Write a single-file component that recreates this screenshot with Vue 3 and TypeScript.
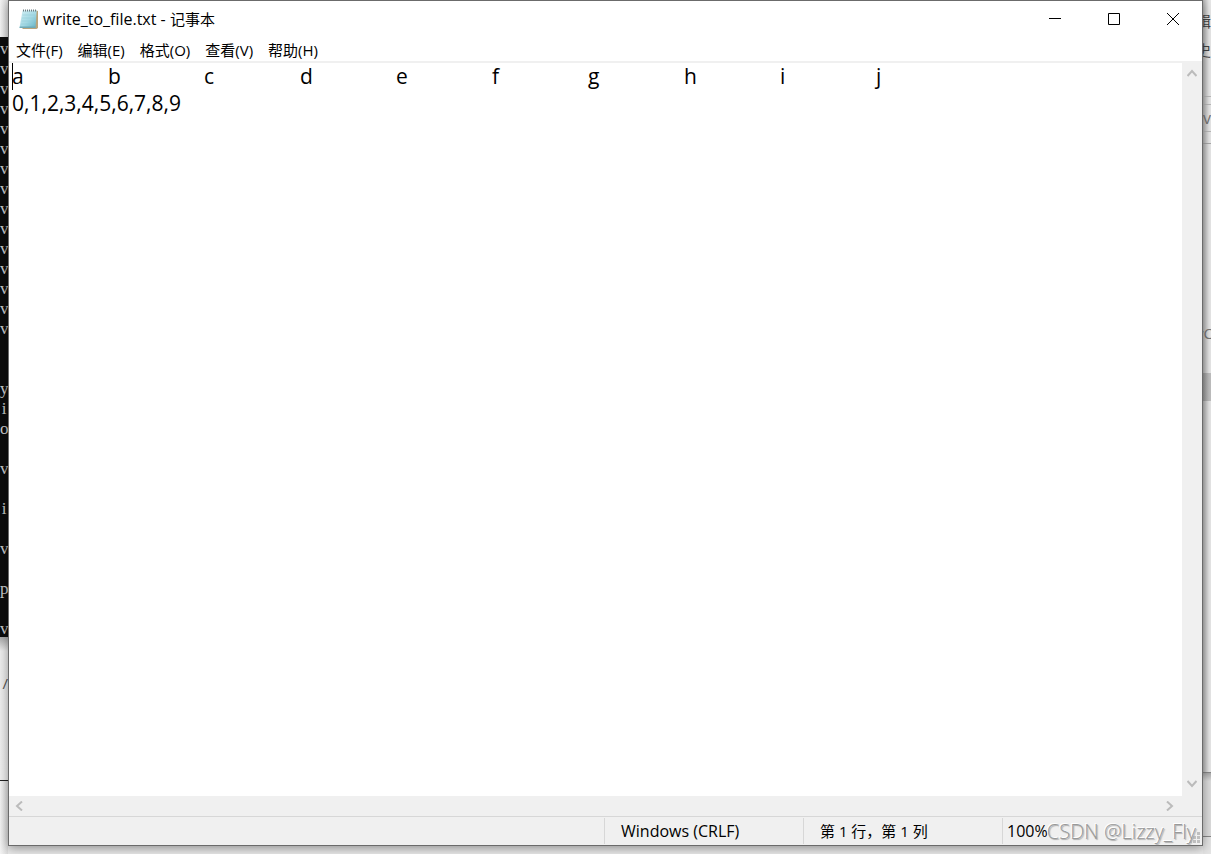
<script setup lang="ts">
import { ref } from 'vue'

const menus = ['文件(F)', '编辑(E)', '格式(O)', '查看(V)', '帮助(H)']
const content = ref('a\tb\tc\td\te\tf\tg\th\ti\tj\n0,1,2,3,4,5,6,7,8,9')
const consoleRows: string[] = [...'vvvvvvvvvvvvvvv  yio v i v p v']
</script>

<template>
  <main class="desktop">
    <aside class="behind left">
      <div class="left-top"></div>
      <div class="console">
        <div v-for="(c, i) in consoleRows" :key="i" class="console-row">{{ c }}</div>
      </div>
      <div class="left-page"><span>/</span></div>
      <div class="left-end"></div>
    </aside>

    <section class="window">
      <header class="titlebar">
        <svg class="app-icon" width="20" height="22" viewBox="0 0 20 22" aria-hidden="true">
          <defs>
            <linearGradient id="sheet" x1="0" y1="0" x2="1" y2="1">
              <stop offset="0" stop-color="#d3eff4" />
              <stop offset=".55" stop-color="#a3d8e3" />
              <stop offset="1" stop-color="#5fb0c2" />
            </linearGradient>
          </defs>
          <path d="M17.500 2.500l1.500.5v17l-1.500 1H3.500v-1z" fill="#b9a47c" />
          <path d="M3.500 2.500h14.200l-1.200 17.500H.5z" fill="url(#sheet)" />
          <path d="M.5 20l.3-1.500h15.800l-.1 1.500z" fill="#6fa9b6" />
          <path d="M3.500 7h12.500M3.100 10h12.500M2.700 13h12.500M2.300 16h12.500" stroke="#8ccad7" stroke-width=".5" />
          <path d="M4.500 1.500v2M6.500 1.500v2M8.500 1.500v2M10.500 1.500v2M12.500 1.500v2M14.500 1.500v2M16.500 1.500v2" stroke="#6d7d82" />
        </svg>
        <h1>write_to_file.txt - <span>记事本</span></h1>
        <div class="controls">
          <button type="button" aria-label="最小化">
            <svg width="12" height="12" viewBox="0 0 12 12"><path d="M0 5.500h12" /></svg>
          </button>
          <button type="button" aria-label="最大化">
            <svg width="12" height="12" viewBox="0 0 12 12"><path d="M.5.5h11v11H.5z" /></svg>
          </button>
          <button type="button" aria-label="关闭">
            <svg width="12" height="12" viewBox="0 0 12 12"><path d="M0 0l12 12M12 0L0 12" /></svg>
          </button>
        </div>
      </header>

      <nav class="menubar">
        <button v-for="m in menus" :key="m" type="button">{{ m }}</button>
      </nav>

      <div class="editor">
        <div class="page">
          <textarea v-model="content" aria-label="文本编辑器" wrap="off" spellcheck="false"></textarea>
          <i class="caret"></i>
        </div>
        <div class="vbar">
          <button type="button" aria-label="向上滚动">
            <svg width="10" height="8" viewBox="0 0 10 8"><path d="M.5 7L5 2l4.500 5" /></svg>
          </button>
          <button type="button" aria-label="向下滚动">
            <svg width="10" height="8" viewBox="0 0 10 8"><path d="M.5 1L5 6l4.500-5" /></svg>
          </button>
        </div>
        <div class="hbar">
          <button type="button" aria-label="向左滚动">
            <svg width="8" height="10" viewBox="0 0 8 10"><path d="M7 .5L2 5l5 4.500" /></svg>
          </button>
          <button type="button" aria-label="向右滚动">
            <svg width="8" height="10" viewBox="0 0 8 10"><path d="M1 .5L6 5 1 9.500" /></svg>
          </button>
        </div>
      </div>

      <footer class="status">
        <span></span>
        <span class="wide latin">Windows (CRLF)</span>
        <span class="wide">第 1 行，第 1 列</span>
        <span class="latin">100%</span>
        <svg class="grip" width="11" height="11" viewBox="0 0 11 11" aria-hidden="true">
          <path d="M8 0h3v3H8zM4 4h3v3H4zM8 4h3v3H8zM0 8h3v3H0zM4 8h3v3H4zM8 8h3v3H8z" fill="#bfbfbf" />
        </svg>
      </footer>
    </section>

    <aside class="behind right">
      <div class="r-head"><span>辑</span><span>史</span></div>
      <div class="r-line"></div>
      <div class="r-field"><span>v</span></div>
      <div class="r-gap"></div>
      <div class="r-list"><span>yC</span></div>
      <div class="r-thumb"></div>
      <div class="r-rest"></div>
      <div class="r-foot"></div>
    </aside>

    <div class="watermark">CSDN @Lizzy_Fly</div>
  </main>
</template>

<style>
body {
  margin: 0;
}
</style>

<style scoped>
* {
  box-sizing: border-box;
}
.desktop {
  position: relative;
  display: grid;
  grid-template-columns: 8px minmax(0, 1fr) 8px;
  height: 100vh;
  padding-bottom: 8px;
  overflow: hidden;
  background: #e9e9e9;
  color: #000;
  font-family: "Open Sans", "Noto Sans CJK SC", sans-serif;
  font-size: 15px;
}
.behind {
  display: flex;
  flex-direction: column;
  min-height: 0;
  margin-bottom: -8px;
  overflow: hidden;
}
.left-top {
  height: 37px;
  background: linear-gradient(90deg, #f4f4f4, #dcdcdc);
}
.console {
  height: 600px;
  background: #0c0c0c;
  color: #ccc;
}
.console-row {
  height: 20px;
  font: 17px/24px "Liberation Serif", serif;
  text-align: center;
  white-space: pre;
}
.left-page {
  height: 144px;
  padding-top: 36px;
  border-bottom: 1px solid #222;
  background: linear-gradient(#a8a8a8, #eee 14px, #f0f0f0);
  color: #555;
  line-height: 20px;
  text-align: right;
}
.left-end {
  flex: 1;
  background: linear-gradient(90deg, #f4f4f4, #dcdcdc);
}
.window {
  position: relative;
  z-index: 1;
  display: flex;
  flex-direction: column;
  min-height: 0;
  border: 1px solid #6b6b6b;
  background: #fff;
  box-shadow: 0 2px 10px rgba(0, 0, 0, .4);
}
button {
  padding: 0;
  border: 0;
  background: none;
  color: inherit;
  font: inherit;
}
.titlebar {
  display: flex;
  align-items: center;
  height: 36px;
  padding-left: 10px;
}
h1 {
  flex: 1;
  margin: 0 0 0 4px;
  font-size: 16px;
  font-weight: 400;
  line-height: 20px;
}
h1 span {
  font-size: 15px;
}
.controls {
  display: flex;
  height: 100%;
}
.controls button {
  display: grid;
  place-items: center;
  width: 59px;
}
.controls path {
  fill: none;
  stroke: #000;
}
.menubar {
  display: flex;
  height: 26px;
  padding-left: 7px;
  gap: 15px;
  border-bottom: 2px solid #f0f0f0;
}
.menubar button {
  white-space: nowrap;
}
.editor {
  flex: 1;
  display: grid;
  grid-template: minmax(0, 1fr) 20px / minmax(0, 1fr) 20px;
  min-height: 0;
  background: #f0f0f0;
}
.page {
  position: relative;
  background: #fff;
}
textarea {
  display: block;
  width: 100%;
  height: 100%;
  padding: 0 3px;
  border: 0;
  outline: 0;
  resize: none;
  overflow: hidden;
  background: transparent;
  color: #000;
  font: 21px/27px "Open Sans", sans-serif;
  tab-size: 96px;
}
.caret {
  position: absolute;
  left: 3px;
  top: 0;
  width: 1px;
  height: 27px;
  background: #000;
}
.vbar {
  display: flex;
  flex-direction: column;
  justify-content: space-between;
  padding-bottom: 2px;
}
.hbar {
  display: flex;
  justify-content: space-between;
  padding-right: 2px;
}
.vbar button,
.hbar button {
  display: grid;
  place-items: center;
  width: 20px;
  height: 20px;
}
.vbar path,
.hbar path {
  fill: none;
  stroke: #bbb;
  stroke-width: 2;
}
.status {
  position: relative;
  display: grid;
  grid-template-columns: minmax(0, 1fr) 199px 199px 200px;
  height: 29px;
  padding: 1px 0;
  border-top: 1px solid #d7d7d7;
  background: #f0f0f0;
  line-height: 26px;
}
.status span + span {
  padding-left: 4px;
  border-left: 1px solid #d7d7d7;
}
.status .wide {
  padding-left: 16px;
}
.latin {
  font-size: 16px;
}
.grip {
  position: absolute;
  right: 2px;
  bottom: 2px;
}
.right {
  background: linear-gradient(90deg, #b8b8b8, #e8e8e8 6px);
  color: #444;
}
.right span {
  display: block;
}
.r-head {
  height: 97px;
  padding-top: 7px;
  border-bottom: 1px solid #bbb;
}
.r-head span {
  width: 15px;
  margin-left: -7px;
  line-height: 29px;
}
.r-line {
  height: 8px;
  border-bottom: 1px solid #bbb;
}
.r-field {
  height: 27px;
  border-bottom: 1px solid #bbb;
  color: #777;
  font-size: 16px;
  line-height: 27px;
}
.r-gap {
  height: 12px;
  border-bottom: 1px solid #aaa;
}
.r-list {
  height: 229px;
  padding-top: 179px;
  color: #777;
  line-height: 20px;
}
.r-list span {
  margin-left: -7px;
}
.r-thumb {
  height: 28px;
  background: linear-gradient(90deg, #999, #c0c0c0 6px);
}
.r-rest {
  flex: 1;
  border-bottom: 1px solid #888;
}
.r-foot {
  height: 81px;
  background: linear-gradient(#aaa, #ddd 8px, #ddd 63px, #888 63px, #888 64px, #e4e4e4 64px);
}
.watermark {
  position: absolute;
  right: 15px;
  bottom: 9px;
  z-index: 2;
  color: #999;
  font-size: 20px;
  font-weight: 300;
  line-height: 26px;
  text-shadow: -1px -1px 0 #fff, 1px 1px 1px #aaa;
}
</style>
